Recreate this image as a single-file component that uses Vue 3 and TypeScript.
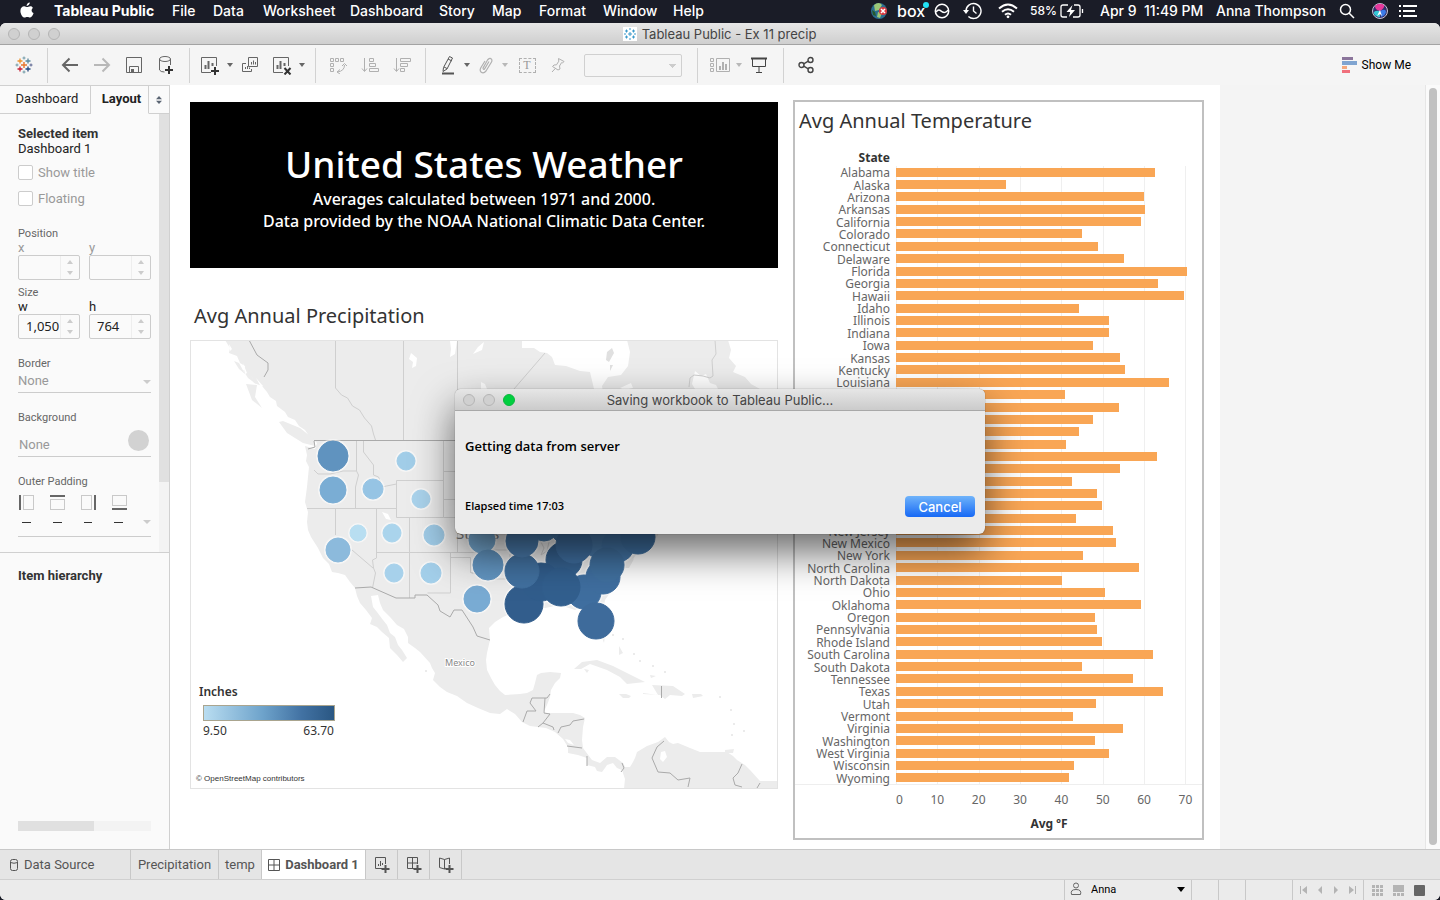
<script setup lang="ts">
import { ref } from 'vue'

interface StateTemp { name: string; value: number }
interface Bubble { x: number; y: number; r: number; fill: string }

const menus: string[] = ['File', 'Data', 'Worksheet', 'Dashboard', 'Story', 'Map', 'Format', 'Window', 'Help']

const temps: StateTemp[] = ([
  ['Alabama', 62.8], ['Alaska', 26.6], ['Arizona', 60.3], ['Arkansas', 60.4], ['California', 59.4],
  ['Colorado', 45.1], ['Connecticut', 49], ['Delaware', 55.3], ['Florida', 70.7], ['Georgia', 63.5],
  ['Hawaii', 70], ['Idaho', 44.4], ['Illinois', 51.8], ['Indiana', 51.7], ['Iowa', 47.8],
  ['Kansas', 54.3], ['Kentucky', 55.6], ['Louisiana', 66.4], ['Maine', 41], ['Maryland', 54.2],
  ['Massachusetts', 47.9], ['Michigan', 44.4], ['Minnesota', 41.2], ['Mississippi', 63.4], ['Missouri', 54.5],
  ['Montana', 42.7], ['Nebraska', 48.8], ['Nevada', 49.9], ['New Hampshire', 43.8], ['New Jersey', 52.7],
  ['New Mexico', 53.4], ['New York', 45.4], ['North Carolina', 59], ['North Dakota', 40.4], ['Ohio', 50.7],
  ['Oklahoma', 59.6], ['Oregon', 48.4], ['Pennsylvania', 48.8], ['Rhode Island', 50.1], ['South Carolina', 62.4],
  ['South Dakota', 45.2], ['Tennessee', 57.6], ['Texas', 64.8], ['Utah', 48.6], ['Vermont', 42.9],
  ['Virginia', 55.1], ['Washington', 48.3], ['West Virginia', 51.8], ['Wisconsin', 43.1], ['Wyoming', 42],
] as [string, number][]).map(([name, value]) => ({ name, value }))

const axisMax = 74.3
const ticks: number[] = [0, 10, 20, 30, 40, 50, 60, 70]
const barWidth = (v: number): string => `${(v / axisMax) * 100}%`

const bubbles: Bubble[] = ([
  [333, 456, 15, '#6093bf'], [333, 490, 13, '#7aadd4'], [373, 489, 10, '#96c4e4'], [406, 461, 9, '#a1cde8'],
  [421, 499, 9, '#a9d2eb'], [358, 533, 8, '#b8def1'], [392, 533, 9, '#aad4ec'], [434, 535, 10, '#9fcbe7'],
  [338, 550, 12, '#8cbadc'], [394, 573, 9, '#a7d1eb'], [431, 573, 10, '#a3cfea'], [477, 599, 13, '#79abd3'],
  [482, 540, 13, '#75a8d0'], [488, 565, 15, '#6295c1'], [544, 526, 15, '#477aab'], [564, 560, 18, '#35618f'],
  [524, 604, 19, '#325d8c'], [541, 582, 19, '#315d8c'], [584, 592, 17, '#3f6e9f'], [561, 587, 19, '#325f8e'],
  [522, 571, 17, '#41709f'], [522, 541, 16, '#4a7bac'], [603, 577, 17, '#3f6e9f'], [597, 541, 16, '#4878a8'],
  [618, 546, 16, '#4374a5'], [607, 565, 17, '#40709f'], [567, 527, 17, '#4678a9'], [574, 545, 18, '#3f6e9f'],
  [638, 537, 17, '#3f70a1'], [596, 621, 18, '#3e6b9b'],
] as [number, number, number, string][]).map(([x, y, r, fill]) => ({ x, y, r, fill }))

const showTitle = ref(false)
const floating = ref(false)
const width = ref('1,050')
const height = ref('764')
</script>

<template>
  <div class="desktop">
    <header class="menubar">
      <svg class="apple" width="14" height="17" viewBox="0 0 14 17" aria-label="Apple"><path fill="#fff" d="M9.800 0.500c.1 1.800-1.500 3.500-3.200 3.400C6.500 2.200 8.100.6 9.800.5zM12.900 5.900c-1.900 1.200-1.600 4.200.7 5.100-.6 1.900-2 4.500-3.500 4.600-1.100 0-1.500-.7-2.800-.7s-1.800.7-2.800.7C2.700 15.600.4 12 .4 8.900c0-3 1.900-4.600 3.800-4.600 1.200 0 2.200.8 3 .8.7 0 1.900-.9 3.400-.8.9 0 1.800.5 2.300 1.600z" /></svg>
      <nav class="menus" aria-label="Menu bar">
        <button class="strong">Tableau Public</button>
        <button v-for="m in menus" :key="m">{{ m }}</button>
      </nav>
      <div class="tray">
        <svg width="18" height="18" viewBox="0 0 18 18"><circle cx="9" cy="9" r="8" fill="#2b6d8f" /><path d="M4 3q5-4 8 0l-3 5-4 1zM8 10l4 1-2 5-3-1z" fill="#9cc777" /><path d="M2 8l3 2 1 4-3-1z" fill="#245a2e" /><circle cx="13" cy="9" r="4" fill="#d8383e" /><path d="M11 7l4 4m0-4l-4 4" stroke="#fff" stroke-width="1.500" /></svg>
        <span class="box">box<i></i></span>
        <svg width="16" height="16" viewBox="0 0 16 16" fill="none" stroke="#fff" stroke-width="1.500"><circle cx="8" cy="8" r="6.700" /><path d="M2 9c3-4 4.500-1 6.500 0S13 9 14 7" /></svg>
        <svg width="19" height="18" viewBox="0 0 19 18" fill="none" stroke="#fff" stroke-width="1.400"><path d="M3 9a7.500 7.500 0 1 1 2.400 5.500" /><path d="M10.500 4.500V9l3 2.500" /><path d="M0 8h6l-3 4z" fill="#fff" stroke="none" /></svg>
        <svg width="20" height="16" viewBox="0 0 20 16" fill="none" stroke="#fff" stroke-width="2"><path d="M1 5.500Q10-2.500 19 5.500M4 8.700q6-5 12 0M7 11.700q3-2.500 6 0" /><circle cx="10" cy="13.800" r="1.400" fill="#fff" stroke="none" /></svg>
        <span class="pct">58%</span>
        <svg width="24" height="14" viewBox="0 0 24 14" fill="none" stroke="#fff" stroke-width="1.300"><path d="M8 1H3Q1 1 1 3v8q0 2 2 2h4M14 1h4q2 0 2 2v8q0 2-2 2h-5M22.500 5v4" /><path d="M12.500 1L6.500 8h3.700L9 13l6-7h-4z" fill="#fff" stroke="none" /></svg>
        <time>Apr 9&nbsp; 11:49 PM</time>
        <span class="user">Anna Thompson</span>
        <svg width="16" height="16" viewBox="0 0 16 16" fill="none" stroke="#fff" stroke-width="1.500"><circle cx="6.500" cy="6.500" r="5" /><path d="M10 10l5 5" /></svg>
        <svg width="18" height="18" viewBox="0 0 18 18"><circle cx="9" cy="9" r="7.500" fill="#33306b" stroke="#c9c4d6" /><path d="M9 9Q4 8 4 4q4-4 9-1 1 3-4 6z" fill="#e6399b" /><path d="M9 9q6-3 6 1-1 4-5 5z" fill="#3d7bea" /><path d="M9 9Q2 8 3 12q3 4 6 3z" fill="#35c7d6" /><path d="M9 8l2 6-2-2-3 2z" fill="#fff" /></svg>
        <svg width="18" height="14" viewBox="0 0 18 14" stroke="#fff" stroke-width="2"><path d="M0 2h2M4 2h14M0 7h2M4 7h12M0 12h2M4 12h14" /></svg>
      </div>
    </header>

    <div class="window">
      <div class="titlebar">
        <span class="lights"><i></i><i></i><i></i></span>
        <h1>
          <svg width="14" height="14" viewBox="0 0 14 14"><rect width="14" height="14" fill="#fff" /><path stroke="#3b9acb" d="M7 5v4M5 7h4M7 1v2M7 11v2M1 7h2M11 7h2M3.500 2.500v3M2 4h3M10.500 2.500v3M9 4h3M3.500 8.500v3M2 10h3M10.500 8.500v3M9 10h3" /></svg>
          Tableau Public - Ex 11 precip
        </h1>
      </div>

      <div class="toolbar" role="toolbar">
        <div class="group g-home">
          <button aria-label="Start page"><svg width="18" height="18" viewBox="0 0 18 18" fill="none"><path stroke="#e8762c" stroke-width="1.400" d="M9 6v6M6 9h6" /><path stroke="#eb912b" stroke-width="1.300" d="M5 2.500v5M2.500 5h5" /><path stroke="#59879b" stroke-width="1.300" d="M13 2.500v5M10.500 5h5" /><path stroke="#c72035" stroke-width="1.300" d="M5 10.500v5M2.500 13h5" /><path stroke="#1f457e" stroke-width="1.300" d="M13 10.500v5M10.500 13h5" /><path stroke="#7199a6" d="M9 .5v3M7.500 2h3M9 14.500v3M7.500 16h3M2 7.500v3M.5 9h3" /><path stroke="#5b6591" d="M16 7.500v3M14.500 9h3" /></svg></button>
        </div>
        <div class="group g-file">
          <button aria-label="Undo"><svg width="18" height="18" viewBox="0 0 18 18" fill="none" stroke="#666" stroke-width="2"><path d="M17 9H2M8.500 2.500L2 9l6.500 6.500" /></svg></button>
          <button aria-label="Redo" class="off"><svg width="18" height="18" viewBox="0 0 18 18" fill="none" stroke="#b8b8b8" stroke-width="2"><path d="M1 9h15M9.500 2.500L16 9l-6.500 6.500" /></svg></button>
          <button aria-label="Save"><svg width="18" height="18" viewBox="0 0 18 18" fill="none" stroke="#666" stroke-width="1"><path d="M1.500 1.500h15v15h-15zM4.500 16v-5.500h9V16" /><path d="M6 13h3v3.500H6z" fill="#666" stroke="none" /></svg></button>
          <button aria-label="New data source"><svg width="18" height="20" viewBox="0 0 18 20" fill="none" stroke="#666" stroke-width="1"><ellipse cx="8" cy="4" rx="5.500" ry="2.500" /><path d="M2.500 4v11q1 2 5 2M13.500 4v6" /><path d="M12 11v8M8 15h8" stroke="#333" stroke-width="2" /></svg></button>
        </div>
        <div class="group g-sheet">
          <button aria-label="New worksheet"><svg width="20" height="20" viewBox="0 0 20 20" fill="none" stroke="#666"><path d="M11 17.500H1.500v-15h15V11" /><path d="M5.500 10v4M8.500 6v8M12.500 8v3" stroke-width="2" /><path d="M15 12v8M11 16h8" stroke="#333" stroke-width="2" /></svg></button>
          <button class="drop" aria-label="Worksheet options"><svg width="6" height="4" viewBox="0 0 6 4"><path d="M0 0h6L3 4z" fill="#666" /></svg></button>
          <button aria-label="Duplicate"><svg width="18" height="18" viewBox="0 0 18 18" fill="none" stroke="#666"><path d="M7.500 1.500h9v9h-9zM5 7.500H1.500v8h9V13M4.500 11v2M6.500 10v3M8.500 11.500V13M10.500 6v2.500M12.500 4.500v4M14.500 6v2.500" /></svg></button>
          <button aria-label="Clear sheet"><svg width="20" height="20" viewBox="0 0 20 20" fill="none" stroke="#666"><path d="M11 17.500H1.500v-15h15V11" /><path d="M5.500 10v4M8.500 6v8M12.500 8v3" stroke-width="2" /><path d="M12.500 13l6 6.500m0-6.500l-6 6.500" stroke="#333" stroke-width="2" /></svg></button>
          <button class="drop" aria-label="Clear options"><svg width="6" height="4" viewBox="0 0 6 4"><path d="M0 0h6L3 4z" fill="#666" /></svg></button>
        </div>
        <div class="group g-sort">
          <button aria-label="Swap rows and columns"><svg width="18" height="18" viewBox="0 0 18 18" fill="none" stroke="#b0b0b0"><path d="M1.500 2.500h3v3h-3zM6.500 2.500h3v3h-3zM11.500 2.500h3v3h-3zM1.500 7.500h3v3h-3zM1.500 12.500h3v3h-3zM15.500 9q0 6-7 7M13 10l2.500-2.500L18 10M11 13.500L8 16l3 2" /></svg></button>
          <button aria-label="Sort ascending"><svg width="18" height="18" viewBox="0 0 18 18" fill="none" stroke="#b0b0b0"><path d="M3.500 2v13M1 12.500l2.500 3 2.500-3M8.500 2.500h4v3h-4zM8.500 7.500h6v3h-6zM8.500 12.500h9v3h-9z" /></svg></button>
          <button aria-label="Sort descending"><svg width="18" height="18" viewBox="0 0 18 18" fill="none" stroke="#b0b0b0"><path d="M3.500 2v13M1 12.500l2.500 3 2.500-3M7.500 2.500h10v3h-10zM7.500 7.500h7v3h-7zM7.500 12.500h4v3h-4z" /></svg></button>
        </div>
        <div class="group g-format">
          <button aria-label="Highlight"><svg width="16" height="20" viewBox="0 0 16 20" fill="none" stroke="#555"><path d="M9.500 1.500l3 1.500-5.500 11-4 2.500.500-4zM8 4l4 2M4 12l3 1.500" /><path d="M2 18.500h12" stroke-width="2" /></svg></button>
          <button class="drop" aria-label="Highlight options"><svg width="6" height="4" viewBox="0 0 6 4"><path d="M0 0h6L3 4z" fill="#666" /></svg></button>
          <button aria-label="Group members"><svg width="16" height="18" viewBox="0 0 16 18" fill="none" stroke="#b0b0b0" stroke-width="1.200"><path d="M11 5.500L6.500 13q-1.200 1-1.500-.8L9.500 4q2.500-3 4.200-.5.5 1-.2 2.500l-5.500 9q-2.500 3-5 1-1.500-1.500-.3-4L7 5" /></svg></button>
          <button class="drop" aria-label="Group options"><svg width="6" height="4" viewBox="0 0 6 4"><path d="M0 0h6L3 4z" fill="#b8b8b8" /></svg></button>
          <button class="label-btn" aria-label="Show mark labels"><span>T</span></button>
          <button class="pin" aria-label="Fix axes"><svg width="16" height="16" viewBox="0 0 16 16" fill="none" stroke="#b0b0b0"><path d="M8.500 1.500l5.500 3-1.500 1.500-1-.3-2 3.300.500 3L8 13 2.500 9.500l1.500-1.500 2.500-.200 2.300-3.600zM5.300 11.500l-3.300 3.500" /></svg></button>
          <select aria-label="Fit" disabled><option></option></select>
        </div>
        <div class="group g-view">
          <button aria-label="Show cards"><svg width="20" height="16" viewBox="0 0 20 16" fill="none" stroke="#b0b0b0"><path d="M.5 1.500h3v3h-3zM.5 6.500h3v3h-3zM.5 11.500h3v3h-3zM6.500 1.500h13v13h-13z" /><path d="M10 9v4M13 5v8M16 7v6" stroke-width="2" /></svg></button>
          <button class="drop" aria-label="Card options"><svg width="6" height="4" viewBox="0 0 6 4"><path d="M0 0h6L3 4z" fill="#b8b8b8" /></svg></button>
          <button class="present" aria-label="Presentation mode"><svg width="18" height="18" viewBox="0 0 18 18" fill="none" stroke="#444"><path d="M2.500 3v7.500h13V3M9 11v5M6 16.500h6" /><path d="M1 2.500h16" stroke-width="2" /></svg></button>
        </div>
        <div class="group g-share">
          <button aria-label="Share"><svg width="16" height="18" viewBox="0 0 16 18" fill="none" stroke="#444" stroke-width="1.400"><circle cx="3.500" cy="9" r="2.500" /><circle cx="12.500" cy="4" r="2.500" /><circle cx="12.500" cy="14" r="2.500" /><path d="M5.700 7.800l4.600-2.600M5.700 10.200l4.600 2.600" /></svg></button>
        </div>
        <button class="showme"><svg width="15" height="16" viewBox="0 0 15 16"><path fill="#8b759b" d="M0 0h11v3H0z" /><path fill="#7fa4d0" d="M0 4h15v4H0z" /><path fill="#f4a77c" d="M0 9h5v3H0z" /><path fill="#f0707c" d="M0 13h8v3H0z" /></svg>Show Me</button>
      </div>

      <main class="workspace">
        <aside class="side">
          <div class="side-tabs">
            <button>Dashboard</button>
            <button class="active">Layout</button>
            <button class="sort" aria-label="Pane menu"><svg width="6" height="8" viewBox="0 0 6 8" fill="#5b6573"><path d="M0 3.300L3 0l3 3.300zM0 4.700h6L3 8z" /></svg></button>
          </div>
          <div class="side-scroll">
            <div class="props">
              <h2>Selected item</h2>
              <p class="item">Dashboard 1</p>
              <label class="check"><input v-model="showTitle" type="checkbox" />Show title</label>
              <label class="check"><input v-model="floating" type="checkbox" />Floating</label>
              <h3 class="pos">Position</h3>
              <div class="pair dim">
                <label>x<span class="spin"><input type="text" /><svg width="6" height="15" viewBox="0 0 6 15" fill="#ccc"><path d="M0 4l3-4 3 4zM0 11h6l-3 4z" /></svg></span></label>
                <label>y<span class="spin"><input type="text" /><svg width="6" height="15" viewBox="0 0 6 15" fill="#ccc"><path d="M0 4l3-4 3 4zM0 11h6l-3 4z" /></svg></span></label>
              </div>
              <h3 class="size">Size</h3>
              <div class="pair">
                <label>w<span class="spin"><input v-model="width" type="text" /><svg width="6" height="15" viewBox="0 0 6 15" fill="#ccc"><path d="M0 4l3-4 3 4zM0 11h6l-3 4z" /></svg></span></label>
                <label>h<span class="spin"><input v-model="height" type="text" /><svg width="6" height="15" viewBox="0 0 6 15" fill="#ccc"><path d="M0 4l3-4 3 4zM0 11h6l-3 4z" /></svg></span></label>
              </div>
              <label class="field">Border
                <span class="line"><select><option>None</option></select><svg width="8" height="4" viewBox="0 0 8 4"><path d="M0 0h8L4 4z" fill="#ccc" /></svg></span>
              </label>
              <label class="field">Background
                <span class="line tall"><button>None</button><i class="swatch"></i></span>
              </label>
              <h3 class="pad">Outer Padding</h3>
              <div class="pads">
                <svg width="15" height="15" viewBox="0 0 15 15"><path stroke="#666" stroke-width="2" d="M1 0v15" /><path fill="none" stroke="#999" stroke-dasharray="1 1" d="M4.500.5h10v14h-10z" /></svg>
                <svg width="15" height="15" viewBox="0 0 15 15"><path stroke="#666" stroke-width="2" d="M0 1h15" /><path fill="none" stroke="#999" stroke-dasharray="1 1" d="M.5 4.500h14v10H.5z" /></svg>
                <svg width="15" height="15" viewBox="0 0 15 15"><path stroke="#666" stroke-width="2" d="M14 0v15" /><path fill="none" stroke="#999" stroke-dasharray="1 1" d="M.5.5h10v14H.5z" /></svg>
                <svg width="15" height="15" viewBox="0 0 15 15"><path stroke="#666" stroke-width="2" d="M0 14h15" /><path fill="none" stroke="#999" stroke-dasharray="1 1" d="M.5.5h14v10H.5z" /></svg>
              </div>
              <div class="dashes"><i></i><i></i><i></i><i></i><svg width="8" height="4" viewBox="0 0 8 4"><path d="M0 0h8L4 4z" fill="#ccc" /></svg></div>
            </div>
            <div class="vtrack"><div></div></div>
          </div>
          <div class="hier">
            <h2>Item hierarchy</h2>
            <div class="htrack"><div></div></div>
          </div>
        </aside>

        <section class="sheet">
          <div class="left">
            <div class="hero">
              <h2>United States Weather</h2>
              <p>Averages calculated between 1971 and 2000.</p>
              <p>Data provided by the NOAA National Climatic Data Center.</p>
            </div>
            <h2 class="viz-title">Avg Annual Precipitation</h2>
            <div class="map">
              <svg class="geo" viewBox="191 341 586 447" preserveAspectRatio="xMidYMid slice">
                <g fill="#ececec">
                  <path d="M225 340L230 348 229 353 237 356 240 363 245 366 244 373 252 377 254 383 262 386 267 392 270 397 276 401 277 406 285 412 288 417 295 420 299 426 305 430 309 436 314 440 317 443 315 449 305 446 307 455 306 461 309 467 308 477 307 487 305 502 308 512 307 522 308 530 311 537 318 548 323 558 329 564 332 572 338 573 345 575 350 582 355 588 357 596 360 603 366 610 372 618 370 624 377 627 382 632 389 638 390 648 397 655 403 662 407 658 402 650 398 645 395 637 390 633 387 625 383 620 377 612 373 607 371 596 378 595 380 603 383 610 390 617 397 625 404 629 408 637 408 643 415 648 420 652 430 663 432 668 435 673 433 680 440 687 447 692 457 696 467 703 478 708 490 713 500 714 507 709 515 714 522 722 530 726 538 727 546 728 555 732 563 739 568 747 568 753 578 755 587 758 587 765 595 767 597 771 602 772 605 768 607 765 613 763 617 768 622 770 625 779 624 789H778V781H760L750 770 745 765 737 760 733 756 727 752 713 752 700 752 690 748 678 743 673 744 669 742 665 737 658 742 647 746 637 752 635 758 633 762 630 767 625 767 623 763 615 757 607 757 600 763 592 760 583 748 582 740 583 727 585 718 580 715 573 713 557 713 543 713 547 705 550 697 551 690 555 683 560 678 561 673 550 672 541 673 537 675 535 683 533 690 527 693 520 694 505 695 500 691 495 685 491 678 487 670 486 660 487 653 490 640 489 628 495 622 503 617 512 613 530 607 545 608 560 605 575 610 584 605 591 612 597 625 601 635 604 643 606 630 603 612 605 600 612 590 620 577 628 563 632 561 635 556 645 545 657 537 667 515 690 485 730 455 765 405 760 389 751 384 745 377 733 372 736 366 729 358 731 350 728 340H627L630 352 628 366 621 375 608 377 602 386 604 400 598 402 594 389 590 372 580 371 566 366 555 365 552 357 547 353 540 352 534 348 522 348 522 340z" />
                  <path d="M279 422l4-1 17 7 15 12v6l-12-3-16-10zM246 384l11 1-2 12 7 11-10-8zM574 669l8-7 15-2 16 6 14 7 18 9-18 2-7-7-13-7-17-6-9 5zM643 693l15 2-6-10 21 1 12 8-3 2-12-1-5 4-5-4-17-1zM619 694l7 0 5 2-2 2-6 0zM692 694l9 0 2 2-10 2zM234 361l5 2 6 11-6-5zM243 370l7 3 6 11-8-6zM619 646l4 7-4 2zM725 750l9-1-1 4-8 0zM584 669l5 1-2 3zM650 675l6 1-5 2zM626 562l8-3-5 9-4 0z" />
                </g>
                <g fill="#fff">
                  <path d="M411 353l6 5-1 8-4 2 1-6-4-3zM450 341l7 0-2 13-5 3 1-8zM473 354l5-7 6-5-2 8zM382 512l6 2 3 6-5-1zM565 739l5 1 4 5-6-2zM661 752l4-1 2 6-4 5-3-3zM695 371l6 5 5-2 4 9 6 2 2 4-23 0-3-5zM620 388l11-5 2 5-9 2zM481 382l4 2 2 5-6 0zM229 344l3 5-2 2zM243 363l4 10-2 1zM256 378l7 8-2 1z" />
                </g>
                <g fill="#e0e0e0"><path d="M607 352l5-4 2 5-5 9-3-2zM610 365l3 0-3 6z" /></g>
                <g fill="none" stroke="#cfcfcf">
                  <path d="M335.500 340v48l6 7 6 3 5 8 7 4 5 8 7 8 2 8 2 6M403.500 340v100M457.500 340v50M545 353l-31 36M715 340l1 14-4 6 1 16-3 2-7-2-9-1-4 3-1 9" />
                  <path d="M314 470l4 4 12 0 13-3h13M356.500 441v30l2 4-3 12v21M307 508.500h89M363.500 441v11l10 13v10l5 2 4 10 4-1 10-2M396.500 480.500h47v37h-47zM443.500 441v40M443.500 471.500h20M443.500 499.500h20M335.500 508v27M352 550l21 18M376.500 508v50l-4 2 1 8 2 5-3 15M409.500 517v81M376.500 552.500h120M443.500 517.500h14v35M450.500 552v41h-23M450.500 557.500h20v15l10 3M490 550h20M470 572l20 7 20 0 0-25" />
                  <path d="M540 540l4 8-3 7 6-4 2-9" />
                </g>
                <path fill="none" stroke="#aaa" d="M249 340l8 15 11 8v7l-4 7M314 440.500h145M314 441l1 6-7 2M355 588l16-1 25 11h19v-3h12l11 10 2 6 10 6 4-7h8l11 17 4 9 13 4M550 694l-3 4h-15l-2 5 6 8h-9l-4 11M545 698l-1 15 6 1-7 9-5 4M543 723l10 4 1 3M558 733l3-6 9-2 3-4 11-2M567 746l15 2M587 756v10M622 763l2 5-3 4M664 741l-7 6-5 11 6 14 12 1 8 7 12-2-2 9M742 764l-4 9-5 5 2 7 7 2M757 788l3-5M661.500 686v12" />
                <g font-family="Noto Sans, sans-serif"><text x="456" y="539" font-size="15" fill="#777">States</text>
                  <text x="445" y="666" font-size="9" fill="#888" stroke="#fff" stroke-width="2" paint-order="stroke">Mexico</text></g>
                <circle v-for="(b, i) in bubbles" :key="'halo' + i" :cx="b.x" :cy="b.y" :r="b.r + 2" fill="#fff" fill-opacity=".5" />
                <circle v-for="(b, i) in bubbles" :key="i" :cx="b.x" :cy="b.y" :r="b.r" :fill="b.fill" :stroke="b.fill" />
                <g fill="#e4e4e4"><circle cx="613" cy="635" r="1" /><circle cx="623" cy="639" r="1" /><circle cx="634" cy="654" r="1" /><circle cx="640" cy="661" r="1" /><circle cx="653" cy="666" r="1" /><circle cx="665" cy="672" r="1" /><circle cx="720" cy="697" r="1" /><circle cx="731" cy="710" r="1" /><circle cx="734" cy="724" r="1" /><circle cx="732" cy="735" r="1" /><circle cx="744" cy="731" r="1" /><circle cx="426" cy="671" r="1" /></g>
              </svg>
              <div class="legend">
                <h3>Inches</h3>
                <div class="ramp"></div>
                <div class="range"><span>9.50</span><span>63.70</span></div>
              </div>
              <small>© OpenStreetMap contributors</small>
            </div>
          </div>

          <div class="temp">
            <h2 class="viz-title">Avg Annual Temperature</h2>
            <div class="col-head">State</div>
            <div class="chart">
              <div class="grid"><i v-for="t in ticks" :key="t"></i></div>
              <div class="rows">
                <div v-for="s in temps" :key="s.name" class="row">
                  <span class="name">{{ s.name }}</span>
                  <span class="plot"><span class="bar" :style="{ width: barWidth(s.value) }"></span></span>
                </div>
              </div>
            </div>
            <div class="axis"><span v-for="t in ticks" :key="t"><b>{{ t }}</b></span></div>
            <div class="axis-title">Avg ºF</div>
          </div>
        </section>
        <div class="gutter"></div>
        <div class="page-scroll"><div></div></div>
      </main>

      <footer>
        <div class="tabs">
          <button class="ds"><svg width="10" height="12" viewBox="0 0 10 12" fill="none" stroke="#555"><rect x="1.500" y=".5" width="7" height="11" rx="2" /><path d="M1.500 3.500q3.500 1.500 7 0" /></svg>Data Source</button>
          <button class="pr">Precipitation</button>
          <button class="tm">temp</button>
          <button class="db active"><svg width="12" height="12" viewBox="0 0 12 12" fill="none" stroke="#555"><path d="M.5.5h11v11H.5zM6 .5v11M.5 6h11" /></svg>Dashboard 1</button>
          <button class="add" aria-label="New worksheet tab"><svg width="16" height="16" viewBox="0 0 16 16" fill="none" stroke="#555"><path d="M8 11.500H1.500v-11h10V7M4.500 7v2M6.500 4v5M8.500 6v2" /><path d="M11.500 8v8M7.500 12h8" stroke-width="2" /></svg></button>
          <button class="add" aria-label="New dashboard"><svg width="16" height="16" viewBox="0 0 16 16" fill="none" stroke="#555"><path d="M8 11.500H1.500v-11h10V7M6.500.5v11M1.500 6h10" /><path d="M11.500 8v8M7.500 12h8" stroke-width="2" /></svg></button>
          <button class="add" aria-label="New story"><svg width="16" height="16" viewBox="0 0 16 16" fill="none" stroke="#555"><path d="M8 11L6.500 12l-5-1.500V1l5 1.500L11.500 1v6M6.500 2.500V12" /><path d="M11.500 8v8M7.500 12h8" stroke-width="2" /></svg></button>
        </div>
        <div class="status">
          <label class="who"><svg width="12" height="14" viewBox="0 0 12 14" fill="none" stroke="#666"><circle cx="6" cy="3.500" r="2.500" /><path d="M1.500 12.500q-1.500-5 4.500-5t4.500 5z" /></svg>
            <select aria-label="User"><option>Anna</option></select><svg width="8" height="5" viewBox="0 0 8 5"><path d="M0 0h8L4 5z" fill="#000" /></svg></label>
          <span class="cell c1"></span><span class="cell c1"></span><span class="cell c2"></span>
          <span class="cell nav">
            <button aria-label="First"><svg width="8" height="8" viewBox="0 0 8 8" fill="#b4b4b4"><path d="M0 0h1v8H0zM7 0v8L2 4z" /></svg></button>
            <button aria-label="Previous"><svg width="8" height="8" viewBox="0 0 8 8" fill="#b4b4b4"><path d="M6 0v8L2 4z" /></svg></button>
            <button aria-label="Next"><svg width="8" height="8" viewBox="0 0 8 8" fill="#b4b4b4"><path d="M2 0v8l4-4z" /></svg></button>
            <button aria-label="Last"><svg width="8" height="8" viewBox="0 0 8 8" fill="#b4b4b4"><path d="M7 0h1v8H7zM1 0v8l5-4z" /></svg></button>
          </span>
          <span class="views">
            <button aria-label="Sheet sorter"><svg width="11" height="11" viewBox="0 0 11 11" fill="#b4b4b4"><path d="M0 0h3v3H0zM4 0h3v3H4zM8 0h3v3H8zM0 4h3v3H0zM4 4h3v3H4zM8 4h3v3H8zM0 8h3v3H0zM4 8h3v3H4zM8 8h3v3H8z" /></svg></button>
            <button aria-label="Filmstrip"><svg width="11" height="11" viewBox="0 0 11 11" fill="#b4b4b4"><path d="M0 0h11v7H0zM0 8h3v3H0zM4 8h3v3H4zM8 8h3v3H8z" /></svg></button>
            <button aria-label="Tabs"><svg width="11" height="11" viewBox="0 0 11 11"><rect width="11" height="11" rx="1" fill="#666" /></svg></button>
          </span>
        </div>
      </footer>
    </div>

    <div class="dialog" role="dialog" aria-labelledby="dlg">
      <div class="dlg-bar">
        <span class="lights"><i></i><i></i><i class="green"></i></span>
        <h2 id="dlg">Saving workbook to Tableau Public...</h2>
      </div>
      <div class="dlg-body">
        <p class="msg">Getting data from server</p>
        <div class="dlg-foot"><span>Elapsed time 17:03</span><button>Cancel</button></div>
      </div>
    </div>
  </div>
</template>

<style>
body { margin: 0; }
</style>

<style scoped>
* { box-sizing: border-box; }
h1, h2, h3, p { margin: 0; font-weight: 400; }
svg { display: block; flex: none; }
button { background: none; border: 0; padding: 0; margin: 0; font: inherit; color: inherit; white-space: nowrap; }
input, select { font: inherit; color: inherit; margin: 0; padding: 0; border: 0; background: none; appearance: none; border-radius: 0; opacity: 1; }

.desktop { position: relative; min-height: 100vh; display: flex; flex-direction: column; background: #1a1c27; font-family: Roboto, "Liberation Sans", sans-serif; font-size: 13px; color: #333; }
.menubar { height: 23px; flex: none; display: flex; align-items: center; padding-bottom: 2px; color: #fff; font: 500 14px Inter, sans-serif; }
.apple { margin-left: 20px; }
.menus { display: grid; grid-template-columns: 118px 41px 50px 87px 89px 53px 47px 64px 70px 40px; margin-left: 20px; }
.menus button { text-align: left; }
.menus .strong { font-weight: 700; }
.tray { margin-left: auto; display: grid; grid-template-columns: 27px 37px 29px 35px 32px 30px 40px 116px 123px 32px 28px 27px; align-items: center; white-space: nowrap; padding-right: 14px; }
.pct { font-size: 12px; }
.box { font-size: 16px; line-height: 18px; font-weight: 500; display: flex; }
.box i { width: 6px; height: 6px; flex: none; border-radius: 50%; background: #22e2f5; margin-left: -2px; }

.window { flex: 1; display: flex; flex-direction: column; border-radius: 6px; overflow: hidden; background: #f4f4f4; }
.titlebar { height: 22px; flex: none; display: flex; align-items: center; background: linear-gradient(#e6e6e6, #cfcfcf); border-bottom: 1px solid #a3a3a3; }
.lights { width: 60px; padding-left: 8px; display: flex; gap: 8px; }
.lights i { width: 12px; height: 12px; border-radius: 50%; border: 1px solid #b4b4b4; background: #d0d0d0; }
.lights .green { background: #00cf3f; border-color: #0bb53e; }
.titlebar h1 { flex: 1; padding-right: 61px; display: flex; align-items: center; justify-content: center; gap: 5px; font: 13px Inter, sans-serif; color: #444; }

.toolbar { height: 40px; flex: none; display: flex; align-items: center; background: #f5f5f5; }
.group { height: 35px; display: flex; align-items: center; border-right: 1px solid #d2d2d2; padding-left: 6px; }
.group button { width: 32px; height: 28px; display: flex; align-items: center; justify-content: center; }
.group .drop { width: 8px; }
.g-home { width: 48px; padding-left: 8px; }
.g-file { width: 142px; }
.g-sheet { width: 126px; padding-left: 4px; }
.g-sort { width: 110px; }
.g-format { width: 272px; padding-left: 7px; }
.g-format button, .g-view button { width: 30px; }
.g-format .label-btn { width: 36px; }
.g-format .pin { width: 26px; }
.g-format .drop, .g-view .drop { width: 8px; }
.label-btn span { width: 17px; height: 15px; border: 1px dashed #b0b0b0; font: 12px/13px "Liberation Serif", serif; color: #999; }
.g-format select { width: 98px; height: 23px; margin-left: 13px; border: 1px solid #d0d0d0; border-radius: 2px; background: linear-gradient(135deg, #ccc 50%, transparent 50%) 88px 9px / 4px 4px no-repeat, linear-gradient(225deg, #ccc 50%, transparent 50%) 84px 9px / 4px 4px no-repeat; }
.g-view { width: 86px; padding-left: 7px; }
.g-view .present { width: 32px; }
.g-share { border: 0; }
.showme { margin-left: auto; margin-right: 29px; display: flex; align-items: center; gap: 5px; color: #000; font-size: 12px; padding-bottom: 1px; }

.workspace { flex: 1; display: grid; grid-template-columns: 170px 1050fr 205fr 15px; }
.side { display: flex; flex-direction: column; background: #fafafa; border-right: 1px solid #d0d0d0; }
.side-tabs { display: flex; height: 29px; border-top: 1px solid #d0d0d0; }
.side-tabs button { border-right: 1px solid #d0d0d0; border-bottom: 1px solid #d0d0d0; width: 91px; padding: 0 0 2px 4px; color: #222; }
.side-tabs .active { width: 58px; font-weight: 700; border-bottom-color: transparent; }
.side-tabs .sort { flex: 1; border-right: 0; display: flex; align-items: center; justify-content: center; padding: 0; }
.side-scroll { display: flex; border-bottom: 1px solid #d0d0d0; }
.props { flex: 1; min-width: 0; padding: 12px 8px 15px 18px; }
.side h2 { font-size: 13px; line-height: 15px; font-weight: 700; }
.item { line-height: 15px; color: #222; }
.check { display: flex; align-items: center; gap: 5px; height: 15px; margin-top: 9px; color: #999; }
.check + .check { margin-top: 11px; }
.check input { width: 15px; height: 15px; border: 1px solid #ccc; border-radius: 2px; background: #fff; }
.side h3 { font-size: 11px; line-height: 14px; color: #666; }
.side .pos { margin-top: 21px; }
.side .size { margin-top: 6px; }
.pair { display: grid; grid-template-columns: 1fr 1fr; gap: 9px; line-height: 14px; color: #222; }
.pair.dim { color: #999; }
.spin { display: flex; align-items: center; height: 25px; border: 1px solid #ccc; border-radius: 2px; color: #222; padding-right: 6px; }
.spin input { width: 0; flex: 1; height: 100%; padding: 0 0 1px 7px; border-right: 1px solid #eee; margin-right: 6px; font-family: "Noto Sans", sans-serif; }
.field { display: block; font-size: 11px; line-height: 14px; color: #666; margin-top: 18px; }
.line { display: flex; align-items: center; justify-content: space-between; height: 22px; border-bottom: 1px solid #ccc; font-size: 13px; color: #999; }
.line select { flex: 1; padding-bottom: 1px; }
.tall { height: 32px; padding: 2px 2px 0 1px; }
.tall button { padding-top: 6px; }
.swatch { width: 21px; height: 21px; border-radius: 50%; background: #d2d2d2; margin-bottom: 3px; }
.side .pad { margin-top: 18px; }
.pads { display: flex; gap: 16px; margin: 6px 0 0 1px; }
.dashes { height: 27px; display: flex; align-items: center; gap: 22px; padding: 0 0 2px 4px; border-bottom: 1px solid #ccc; }
.dashes i { width: 9px; height: 1px; background: #333; }
.dashes svg { margin-left: -2px; }
.vtrack { width: 10px; flex: none; background: #f3f3f3; }
.vtrack div { height: 84%; background: #e0e0e0; }
.hier { flex: 1; display: flex; flex-direction: column; justify-content: space-between; padding: 15px 18px 18px; }
.htrack { height: 10px; background: #f3f3f3; }
.htrack div { width: 57%; height: 10px; background: #e0e0e0; }

.sheet { display: grid; grid-template-columns: 588fr 411fr; gap: 15px; padding: 15px 16px 9px 20px; background: #fff; font-family: "Noto Sans", "Open Sans", sans-serif; }
.left { display: flex; flex-direction: column; padding: 2px 0 51px; }
.hero { height: 166px; background: #000; color: #fff; text-align: center; padding-top: 37px; font-size: 16px; line-height: 22px; }
.hero p { font-weight: 500; }
.hero h2 { font-size: 37px; line-height: 49px; font-weight: 500; }
.viz-title { font-size: 20px; line-height: 28px; }
.left .viz-title { padding: 34px 4px 10px; }
.map { flex: 1; position: relative; border: 1px solid #e3e3e3; overflow: hidden; }
.geo { position: absolute; inset: 0; width: 100%; height: 100%; }
.legend { position: absolute; left: 8px; bottom: 49px; width: 136px; font-size: 12px; line-height: 16px; }
.legend h3 { font-size: 12px; font-weight: 600; line-height: 16px; margin-bottom: 5px; }
.ramp { height: 16px; margin-left: 4px; border: 1px solid #aaa58f; background: linear-gradient(90deg, #b9ddf1, #6ea3cb 45%, #4272a3 75%, #2a5783); margin-bottom: 2px; }
.range { display: flex; justify-content: space-between; padding: 0 1px 0 4px; }
.map small { position: absolute; left: 5px; bottom: 4px; font: 8px/10px "Liberation Sans", sans-serif; color: #333; }

.temp { display: flex; flex-direction: column; border: 2px solid #c0c0c0; padding: 5px 0 4px; }
.temp .viz-title { padding-left: 4px; }
.col-head { width: 95px; text-align: right; font-size: 12px; line-height: 16px; font-weight: 700; margin: 15px 0 0; }
.chart { flex: 1; display: grid; border-bottom: 1px solid #eee; }
.grid, .rows { grid-area: 1 / 1; }
.grid, .axis { display: grid; grid-template-columns: repeat(7, 10fr) 4fr; margin-left: 101px; }
.grid i { border-left: 1px solid #efefef; }
.rows { display: grid; grid-template-rows: repeat(50, 1fr); }
.row { display: flex; align-items: center; min-height: 0; }
.name { width: 95px; margin-right: 6px; padding-top: 2px; text-align: right; font-size: 12px; line-height: 10px; color: #666; white-space: nowrap; }
.plot { flex: 1; }
.bar { display: block; height: 9px; background: #f9a655; }
.axis { font-size: 12px; line-height: 16px; color: #666; padding-top: 7px; }
.axis span { width: 24px; margin-left: -12px; text-align: center; }
.axis span:first-child { margin-left: 0; text-align: left; }
.axis b { font-weight: 400; }
.axis-title { margin-left: 101px; text-align: center; font-size: 12px; line-height: 16px; font-weight: 700; padding: 8px 0 2px; }
.gutter { background: #f4f4f4; }
.page-scroll { padding: 3px 3px 4px; background: #fafafa; border-left: 1px solid #e6e6e6; display: flex; }
.page-scroll div { flex: 1; border-radius: 4px; background: #c1c1c1; }

.tabs { height: 31px; display: flex; background: #e5e5e5; border-top: 1px solid #c8c8c8; border-bottom: 1px solid #d0d0d0; color: #555; }
.tabs button { border-right: 1px solid #c8c8c8; display: flex; align-items: center; justify-content: center; gap: 5px; }
.tabs .ds { width: 131px; justify-content: flex-start; padding-left: 9px; }
.tabs .pr { width: 88px; }
.tabs .tm { width: 43px; }
.tabs .db { width: 104px; background: #fff; font-weight: 700; }
.tabs .add { width: 32px; }
.status { height: 20px; display: flex; justify-content: flex-end; background: #ebebeb; }
.who { width: 128px; display: flex; align-items: center; border: solid #c8c8c8; border-width: 0 1px; padding: 0 6px 2px 5px; font-size: 11px; color: #000; }
.who select { flex: 1; padding-left: 9px; }
.cell { border-right: 1px solid #c8c8c8; }
.c1 { width: 27px; }
.c2 { width: 47px; }
.nav { width: 71px; display: flex; align-items: center; justify-content: center; gap: 8px; }
.views { width: 76px; display: flex; align-items: center; gap: 10px; padding-left: 8px; }

.dialog { position: absolute; left: 50%; top: 389px; width: 530px; transform: translateX(-50%); border-radius: 6px; overflow: hidden; background: #ebebeb; box-shadow: 0 0 1px rgba(0, 0, 0, .6), 0 18px 40px rgba(0, 0, 0, .6); }
.dlg-bar { height: 22px; display: flex; align-items: center; background: linear-gradient(#e6e6e6, #cbcbcb); border-bottom: 1px solid #a8a8a8; }
.dlg-bar h2 { flex: 1; text-align: center; padding-right: 60px; font: 13px Inter, sans-serif; color: #444; }
.dlg-body { padding: 25px 10px 17px; color: #000; font-family: "Open Sans", "Noto Sans", sans-serif; font-weight: 600; }
.msg { font-size: 13px; line-height: 20px; font-weight: 600; }
.dlg-foot { display: flex; justify-content: space-between; align-items: center; margin-top: 40px; font-size: 11px; line-height: 16px; }
.dlg-foot span { padding-bottom: 2px; }
.dlg-foot button { width: 70px; height: 21px; border-radius: 4px; background: linear-gradient(#6fb3fa, #1769f5); color: #fff; font: 500 13px Inter, sans-serif; }
</style>
